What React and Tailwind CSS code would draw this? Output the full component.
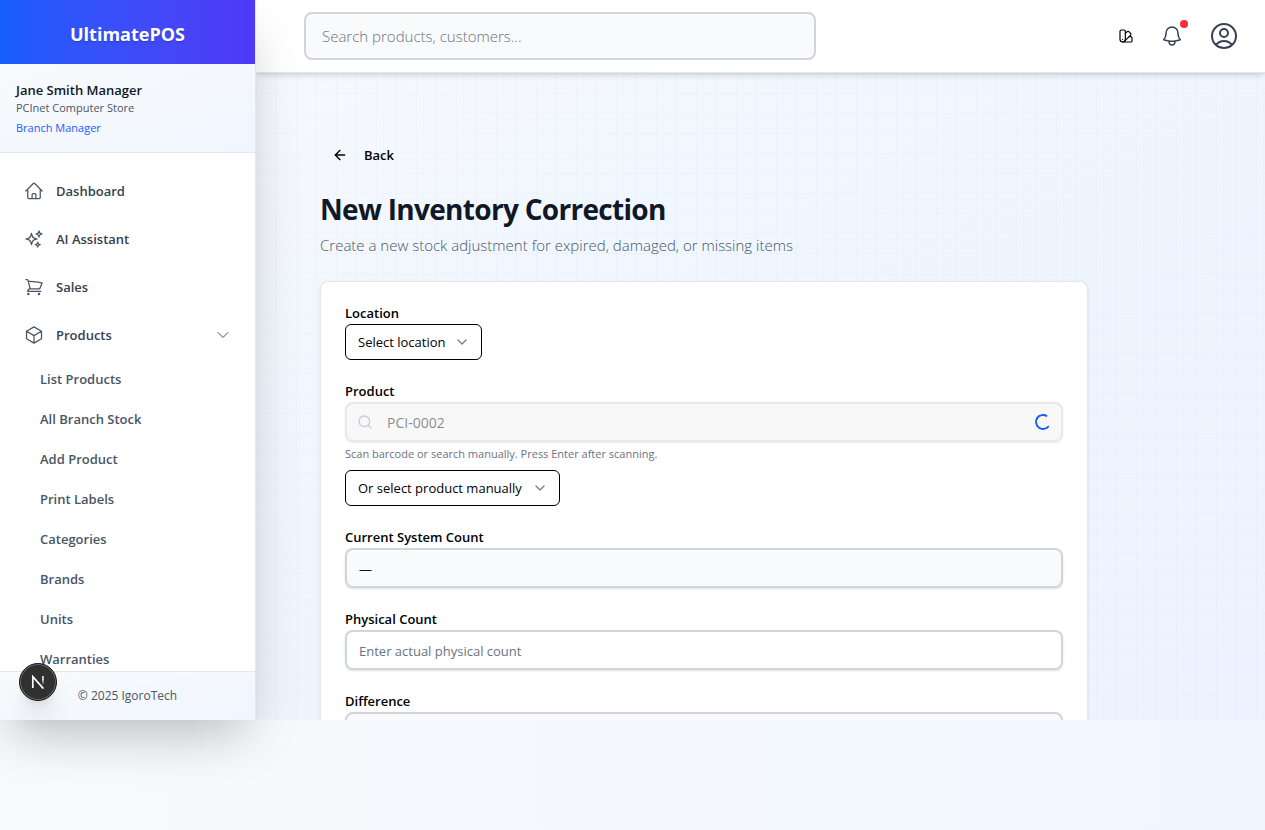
import React from "react";
import {
  HiOutlineHome,
  HiOutlineSparkles,
  HiOutlineShoppingCart,
  HiOutlineCube,
  HiOutlineBell,
  HiOutlineChevronDown,
  HiOutlineUserCircle,
} from "react-icons/hi2";
import { ArrowLeft, ChevronDown, Search, SwatchBook } from "lucide-react";

const mainLinks = [
  { label: "Dashboard", icon: HiOutlineHome },
  { label: "AI Assistant", icon: HiOutlineSparkles },
  { label: "Sales", icon: HiOutlineShoppingCart },
];

const productLinks = [
  "List Products",
  "All Branch Stock",
  "Add Product",
  "Print Labels",
  "Categories",
  "Brands",
  "Units",
  "Warranties",
];

function Sidebar() {
  return (
    <aside className="relative z-20 flex w-64 shrink-0 flex-col border-r border-gray-200 bg-white shadow-2xl">
      <div className="flex h-16 shrink-0 items-center justify-center bg-linear-to-r from-[#155dfc] to-[#4f39f6] pt-1">
        <span className="text-lg font-bold text-white text-shadow-sm">UltimatePOS</span>
      </div>
      <div className="shrink-0 border-b border-gray-200 bg-linear-to-br from-gray-50 to-blue-50 p-4">
        <p className="text-[13px] leading-5 font-semibold text-gray-900">Jane Smith Manager</p>
        <p className="text-[11px] leading-4 text-gray-600">PCInet Computer Store</p>
        <p className="mt-1 text-[11px] leading-4 text-blue-600">Branch Manager</p>
      </div>
      <nav className="min-h-0 flex-1 overflow-hidden px-3 py-4">
        <ul className="flex flex-col gap-1">
          {mainLinks.map(({ label, icon: Icon }) => (
            <li key={label}>
              <a href="#" className="flex h-11 items-center gap-3 px-3 text-[13px] font-semibold text-gray-700">
                <Icon className="size-5 text-gray-600" />
                <span className="pt-0.5">{label}</span>
              </a>
            </li>
          ))}
          <li>
            <button type="button" className="flex h-11 w-full items-center gap-3 px-3 text-[13px] font-semibold text-gray-700">
              <HiOutlineCube className="size-5 text-gray-600" />
              <span className="pt-0.5">Products</span>
              <HiOutlineChevronDown className="ml-auto size-4 text-gray-600" />
            </button>
            <ul className="mt-1 flex flex-col gap-1">
              {productLinks.map((label) => (
                <li key={label}>
                  <a href="#" className="flex h-9 items-center px-7 pt-0.5 text-[13px] font-semibold text-gray-600">
                    {label}
                  </a>
                </li>
              ))}
            </ul>
          </li>
        </ul>
      </nav>
      <div className="shrink-0 border-t border-gray-200 bg-linear-to-br from-gray-50 to-blue-50 p-4 text-center text-xs text-gray-600">
        © 2025 IgoroTech
      </div>
      <button
        type="button"
        aria-label="Open developer tools"
        className="absolute bottom-[19px] left-[19px] flex size-[38px] items-center justify-center rounded-full border border-[#1a1a1a] bg-[#2f302f] shadow-xl ring-1 ring-[#6a6a6a] ring-inset"
      >
        <svg viewBox="0 0 14 14" className="size-[14px]" fill="none" strokeWidth="1.7" aria-hidden="true">
          <defs>
            <linearGradient id="fade-stem" x1="0" y1="0" x2="0" y2="1">
              <stop offset="0.4" stopColor="#fff" />
              <stop offset="1" stopColor="#fff" stopOpacity="0" />
            </linearGradient>
          </defs>
          <path d="M1.8 13V1.6L12.4 13.6" stroke="#fff" />
          <path d="M11.2 1h1.5v9h-1.5z" fill="url(#fade-stem)" />
        </svg>
      </button>
    </aside>
  );
}

function TopBar() {
  return (
    <header className="relative z-10 flex shrink-0 items-center justify-between border-b border-gray-200 bg-white py-3 pr-[25px] pl-12 shadow-md">
      <input
        type="search"
        aria-label="Search products, customers"
        placeholder="Search products, customers..."
        className="h-12 w-full max-w-lg rounded-lg border-2 border-gray-300 bg-gray-50 px-4 text-[15px] font-light text-gray-900 placeholder:text-gray-500"
      />
      <div className="flex items-center gap-4">
        <button type="button" aria-label="Change theme" className="flex h-9 w-5 items-center justify-center text-black">
          <SwatchBook className="size-4" strokeWidth={1.75} />
        </button>
        <button type="button" aria-label="Notifications" className="relative flex size-10 items-center justify-center text-gray-700">
          <HiOutlineBell className="size-6" />
          <span className="absolute top-1 right-1 size-2 rounded-full bg-red-500" />
        </button>
        <button type="button" aria-label="Account" className="text-gray-700">
          <HiOutlineUserCircle className="size-8" />
        </button>
      </div>
    </header>
  );
}

function Field({ id, label, children }) {
  return (
    <div className="flex flex-col items-start gap-1">
      <label htmlFor={id} className="text-[13px] leading-[14px] font-semibold text-black">
        {label}
      </label>
      {children}
    </div>
  );
}

function Dropdown({ id, label, text, width }) {
  return (
    <div className={`relative ${width}`}>
      <select
        id={id}
        aria-label={label}
        className="block h-9 w-full appearance-none rounded-md border border-black bg-white pt-0.5 pr-9 pl-3 text-[13px] text-black"
      >
        <option>{text}</option>
      </select>
      <ChevronDown className="pointer-events-none absolute top-2.5 right-3 size-4 text-black opacity-50" />
    </div>
  );
}

const inputClass =
  "h-10 w-full rounded-lg border-2 border-gray-300 px-3 pt-0.5 text-[13px] text-gray-900 shadow-sm placeholder:text-gray-500";

function CorrectionForm() {
  return (
    <form className="mt-6 flex flex-col gap-6 rounded-lg border border-gray-200 bg-white p-6 shadow-sm">
      <Field id="location" label="Location">
        <Dropdown id="location" text="Select location" width="w-[137px]" />
      </Field>
      <Field id="product" label="Product">
        <div className="relative w-full">
          <Search className="absolute top-3 left-3 z-10 size-4 text-gray-400 opacity-50" />
          <input
            id="product"
            disabled
            placeholder="PCI-0002"
            className="block h-10 w-full rounded-lg border-2 border-gray-300 bg-[#f2f2f2] px-10 text-sm opacity-50 shadow-sm placeholder:text-gray-900"
          />
          <span
            role="status"
            aria-label="Loading"
            className="absolute top-3 right-3 size-4 rotate-80 rounded-full border-2 border-blue-600 border-t-transparent"
          />
        </div>
        <p className="text-[11px] leading-4 text-gray-500">Scan barcode or search manually. Press Enter after scanning.</p>
        <div className="mt-1">
          <Dropdown id="product-manual" label="Select product manually" text="Or select product manually" width="w-[215px]" />
        </div>
      </Field>
      <Field id="system-count" label="Current System Count">
        <input id="system-count" readOnly defaultValue="—" className={`${inputClass} bg-gray-50`} />
      </Field>
      <Field id="physical-count" label="Physical Count">
        <input id="physical-count" placeholder="Enter actual physical count" className={`${inputClass} bg-white`} />
      </Field>
      <Field id="difference" label="Difference">
        <input id="difference" readOnly className={`${inputClass} bg-gray-50`} />
      </Field>
    </form>
  );
}

export default function App() {
  return (
    <div className="flex h-screen flex-col overflow-hidden bg-linear-to-r from-gray-50 to-blue-50 pb-[110px] font-['Open_Sans','Noto_Sans',sans-serif]">
      <div className="flex min-h-0 flex-1 bg-linear-to-br from-gray-50 via-blue-50 to-indigo-50">
        <Sidebar />
        <div className="flex min-w-0 flex-1 flex-col overflow-hidden">
          <TopBar />
          <main className="min-h-0 flex-1 overflow-hidden bg-[linear-gradient(rgba(59,130,246,0.03)_1px,transparent_1px),linear-gradient(90deg,rgba(59,130,246,0.03)_1px,transparent_1px)] bg-size-[20px_20px] p-16">
            <div className="max-w-3xl">
              <button type="button" className="flex h-9 items-center gap-4 px-3 text-[13px] font-semibold text-black">
                <ArrowLeft className="size-4" />
                <span className="pt-0.5">Back</span>
              </button>
              <h1 className="mt-4 text-[28px] leading-10 font-bold tracking-tight text-gray-900">New Inventory Correction</h1>
              <p className="mt-1 text-[15px] leading-6 font-light text-gray-600">
                Create a new stock adjustment for expired, damaged, or missing items
              </p>
              <CorrectionForm />
            </div>
          </main>
        </div>
      </div>
    </div>
  );
}
